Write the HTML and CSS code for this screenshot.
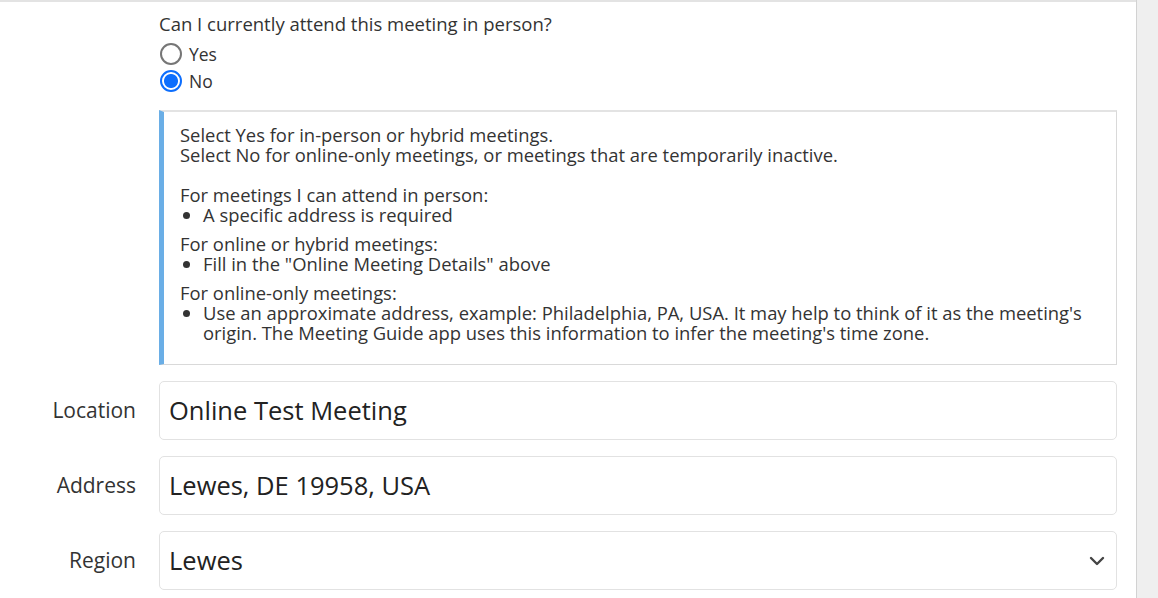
FILE: index.html
```html
<!DOCTYPE html>
<html>
<head>
<meta charset="utf-8">
<link rel="stylesheet" href="styles.css">
</head>
<body>
<div class="page">
  <main class="main">
    <div class="form">
      <div class="row">
        <div class="label"></div>
        <div class="field">
          <div class="question">Can I currently attend this meeting in person?</div>
          <label class="radio"><span class="dot"></span><span>Yes</span></label>
          <label class="radio"><span class="dot checked"></span><span>No</span></label>
          <div class="info">
            <p>Select Yes for in-person or hybrid meetings.<br>Select No for online-only meetings, or meetings that are temporarily inactive.</p>
            <div class="group">
              <div>For meetings I can attend in person:</div>
              <ul><li>A specific address is required</li></ul>
            </div>
            <div class="group">
              <div>For online or hybrid meetings:</div>
              <ul><li>Fill in the "Online Meeting Details" above</li></ul>
            </div>
            <div class="group">
              <div>For online-only meetings:</div>
              <ul><li>Use an approximate address, example: Philadelphia, PA, USA. It may help to think of it as the meeting's origin. The Meeting Guide app uses this information to infer the meeting's time zone.</li></ul>
            </div>
          </div>
        </div>
      </div>
      <div class="row input-row">
        <div class="label">Location</div>
        <div class="field"><div class="input">Online Test Meeting</div></div>
      </div>
      <div class="row input-row">
        <div class="label">Address</div>
        <div class="field"><div class="input">Lewes, DE 19958, USA</div></div>
      </div>
      <div class="row input-row">
        <div class="label">Region</div>
        <div class="field"><div class="input select"><span>Lewes</span>
          <svg class="chev" width="16" height="10" viewBox="0 0 16 10"><path d="M2 2l6 6 6-6" fill="none" stroke="#444" stroke-width="2.4" stroke-linecap="round" stroke-linejoin="round"/></svg>
        </div></div>
      </div>
    </div>
  </main>
  <div class="scrollbar"></div>
</div>
</body>
</html>
```
FILE: styles.css
```css
html, body {
  margin: 0;
  padding: 0;
  height: 100%;
  overflow: hidden;
  background: #fff;
}
body {
  font-family: "Open Sans", "Noto Sans", sans-serif;
  color: #333;
}
.page {
  display: flex;
  height: 598px;
}
.main {
  flex: 1;
  border-top: 2px solid #e3e3e3;
}
.scrollbar {
  width: 21px;
  background: #efefef;
  border-left: 1px solid #d2d2d2;
}
.form {
  padding-right: 19px;
}
.row {
  display: grid;
  grid-template-columns: 159px 1fr;
}
.label {
  text-align: right;
  padding-right: 23px;
  font-size: 21px;
  color: #333;
  line-height: 59px;
}
.question {
  font-size: 18.5px;
  line-height: 22px;
  margin-top: 11px;
  margin-bottom: 5.5px;
}
.radio {
  display: flex;
  align-items: center;
  gap: 7px;
  font-size: 17.5px;
  height: 27px;
}
.dot {
  width: 18px;
  height: 18px;
  border: 2px solid #767676;
  border-radius: 50%;
  box-sizing: content-box;
  margin-left: 1px;
}
.dot.checked {
  border-color: #0d6efd;
  background: radial-gradient(circle, #0d6efd 0 6.5px, #fff 7.5px);
}
.info {
  margin-top: 15.5px;
  border: 1px solid #d9d9d9;
  border-top: 2px solid #e3e3e3;
  border-left: 5px solid #6aaee6;
  padding: 13px 20px 21px 16px;
  font-size: 18.4px;
  line-height: 20px;
  color: #333;
}
.info p {
  margin: 0 0 20px;
}
.group {
  margin-bottom: 9px;
}
.group:last-child {
  margin-bottom: 0;
}
.info ul {
  margin: 0;
  padding-left: 23px;
}
.input-row {
  margin-top: 16px;
}
.input {
  height: 59px;
  box-sizing: border-box;
  border: 1px solid #e2e2e2;
  border-radius: 5px;
  padding: 0 9px;
  font-size: 25.5px;
  line-height: 57px;
  color: #222;
}
.select {
  display: flex;
  justify-content: space-between;
  align-items: center;
}
.chev {
  margin-right: 2px;
}
```
